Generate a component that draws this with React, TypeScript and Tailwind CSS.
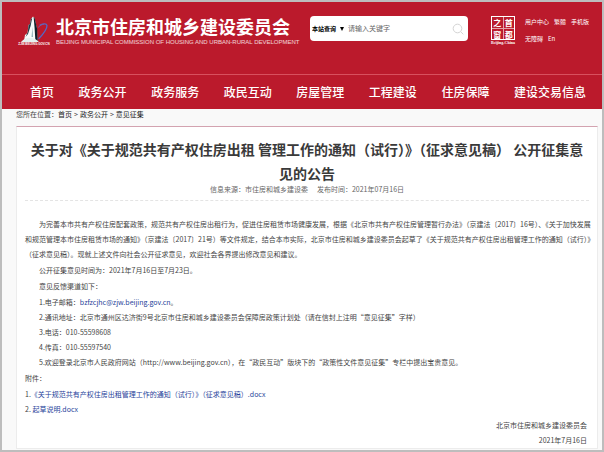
import { useState } from "react";

const NAV = ["首页", "政务公开", "政务服务", "政民互动", "房屋管理", "工程建设", "住房保障", "建设交易信息"];
const CRUMBS = ["首页", "政务公开", "意见征集"];
const USER_LINKS = [
  ["用户中心", "繁體", "手机版"],
  ["无障碍", "En"],
];

function Logo() {
  return (
    <div className="flex w-9 shrink-0 flex-col items-center">
      <svg viewBox="0 0 36 26" className="h-[26px] w-9" aria-hidden="true">
        {/* tower */}
        <path d="M8 25 L9 19 L11.5 17 L12.5 9 L14 8 L15 3 L17 0.5 L18.5 2 L21 13 L21.5 25 Z" fill="#f6fbfb" />
        <path d="M17.6 1 L18.6 2 L21.2 13 L21.7 25 L19.4 25 L18.6 12 Z" fill="#10202a" />
        <path d="M15 3 L16.2 2 L14.6 10 L12 18 L9.5 21 L11.8 16 L12.6 9 L14 8 Z" fill="#223842" />
        <path d="M16.5 11 L17 21 L15.5 21 Z" fill="#8fb0b8" />
        <path d="M5 26 Q10 21 15 22 Q19 22 23 26 Z" fill="#e4f1f1" />
        {/* ribbon */}
        <path d="M24 9 Q30 6.5 31 9.5 Q31 14 23 22.5" fill="none" stroke="#5468c4" strokeWidth="1.3" strokeLinecap="round" />
        <path d="M22 11.5 Q25 8.5 28 8" fill="none" stroke="#7d5aa8" strokeWidth="0.8" />
      </svg>
      <span className="whitespace-nowrap font-['Liberation_Sans'] text-[3px] leading-[4px] font-bold text-white">
        ZJW.BEIJING.GOV.CN
      </span>
    </div>
  );
}

function Seal() {
  return (
    <div className="flex w-[26px] shrink-0 flex-col items-center">
      <div className="grid size-6 grid-cols-2 gap-px border border-white bg-white/60 text-center text-[8px] leading-[11px] font-bold">
        {["之", "首", "窗", "都"].map((c) => (
          <span key={c} className="overflow-hidden bg-[#bb1a2c]">{c}</span>
        ))}
      </div>
      <span className="whitespace-nowrap font-['Liberation_Serif'] text-[4px] leading-[5px] font-bold">Beijing-China</span>
    </div>
  );
}

function SearchBox() {
  const [keyword, setKeyword] = useState("");

  return (
    <form
      role="search"
      onSubmit={(e) => e.preventDefault()}
      className="flex h-[25px] w-[158px] shrink-0 items-center rounded bg-white pr-1 pl-0.5 text-[7px]"
    >
      <select
        aria-label="查询范围"
        className="w-[26px] appearance-none bg-transparent text-[6px] font-bold text-black outline-none"
      >
        <option>本站查询</option>
      </select>
      <svg viewBox="0 0 4 4" className="mx-0.5 size-1 shrink-0" aria-hidden="true">
        <path d="M0 0 H4 L2 4 Z" fill="#000" />
      </svg>
      <input
        type="text"
        aria-label="关键字"
        placeholder="请输入关键字"
        value={keyword}
        onChange={(e) => setKeyword(e.target.value)}
        className="ml-0.5 min-w-0 flex-1 text-[#333] outline-none placeholder:text-[#666]"
      />
      <button type="submit" aria-label="搜索">
        <svg viewBox="0 0 12 12" className="size-3" fill="none" stroke="#d4d4d4" aria-hidden="true">
          <circle cx="5.5" cy="5.5" r="4.3" />
          <path d="M8.8 8.8 L11.3 11.3" />
        </svg>
      </button>
    </form>
  );
}

function Header() {
  return (
    <header className="bg-[#bb1a2c] text-white">
      <div className="flex h-[72px] items-start pt-3.5 pr-3 pl-3.5">
        <Logo />
        <div className="ml-1 w-60 shrink-0">
          <p className="text-[18px] leading-5 font-bold whitespace-nowrap">北京市住房和城乡建设委员会</p>
          <p className="font-['Liberation_Sans'] text-[6px] leading-3 whitespace-nowrap text-white/80">
            BEIJING MUNICIPAL COMMISSION OF HOUSING AND URBAN-RURAL DEVELOPMENT
          </p>
        </div>
        <div className="ml-auto flex">
          <SearchBox />
          <div className="ml-[22px]">
            <Seal />
          </div>
          <div className="ml-[9px] flex w-[65px] flex-col gap-2 pt-px text-[6px] leading-[9px]">
            {USER_LINKS.map((row) => (
              <div key={row[0]} className="flex gap-[5px] whitespace-nowrap">
                {row.map((t) => (
                  <a key={t} href="#">{t}</a>
                ))}
              </div>
            ))}
          </div>
        </div>
      </div>
      <nav className="flex h-[35px] items-center justify-between border-t border-[#d8505e] pr-4 pl-7 text-[12px] leading-4 font-medium">
        {NAV.map((t) => (
          <a key={t} href="#" className="whitespace-nowrap">{t}</a>
        ))}
      </nav>
    </header>
  );
}

export default function App() {
  return (
    <div
      lang="zh-CN"
      className="border-2 border-[#bdbdbd] bg-[#f9f9f9] font-['Noto_Sans_CJK_SC',sans-serif] text-[7px] text-[#444]"
    >
      <Header />

      <div className="pl-3.5 leading-[11px]">
        您所在位置：
        {CRUMBS.map((c, i) => (
          <span key={c}>
            {i > 0 && <span className="mx-0.5">&gt;</span>}
            <a href="#" className="text-[#222]">{c}</a>
          </span>
        ))}
      </div>

      <main className="mt-1.5 mr-1 mb-px ml-3.5 border border-[#ececec] border-t-[#d3a3b0] bg-white">
        <h1 className="px-2 pt-2.5 text-center text-[14px] leading-6 font-bold text-[#3a3a3a]">
          关于对《关于规范共有产权住房出租 管理工作的通知（试行）》（征求意见稿） 公开征集意见的公告
        </h1>
        <div className="mx-2 flex justify-center gap-[9px] border-b border-dashed border-[#e4e4e4] pb-1.5 leading-[9px] text-[#666]">
          <span>信息来源：市住房和城乡建设委</span>
          <span>发布时间：2021年07月16日</span>
        </div>

        <article className="flex flex-col gap-px pt-4 pr-0.5 pl-2 leading-[15px]">
          <p className="indent-[14px]">
            为完善本市共有产权住房配套政策，规范共有产权住房出租行为，促进住房租赁市场健康发展，根据《北京市共有产权住房管理暂行办法》（京建法〔2017〕16号）、《关于加快发展和规范管理本市住房租赁市场的通知》（京建法〔2017〕21号）等文件规定，结合本市实际，北京市住房和城乡建设委员会起草了《关于规范共有产权住房出租管理工作的通知（试行）》（征求意见稿）。现就上述文件向社会公开征求意见，欢迎社会各界提出修改意见和建议。
          </p>
          <p className="indent-[14px]">公开征集意见时间为：2021年7月16日至7月23日。</p>
          <p className="indent-[14px]">意见反馈渠道如下：</p>
          <ul className="pl-[14px]">
            <li>
              1.电子邮箱：
              <a href="mailto:bzfzcjhc@zjw.beijing.gov.cn" className="text-[#1f3f9a]">bzfzcjhc@zjw.beijing.gov.cn</a>。
            </li>
            <li>2.通讯地址：北京市通州区达济街9号北京市住房和城乡建设委员会保障房政策计划处（请在信封上注明“意见征集”字样）</li>
            <li>3.电话：010-55598608</li>
            <li>4.传真：010-55597540</li>
            <li>5.欢迎登录北京市人民政府网站（http://www.beijing.gov.cn），在“政民互动”版块下的“政策性文件意见征集”专栏中提出宝贵意见。</li>
          </ul>
          <p>附件：</p>
          <ol>
            <li>
              1.
              <a href="#" className="text-[#1f3f9a]">《关于规范共有产权住房出租管理工作的通知（试行）》（征求意见稿）.docx</a>
            </li>
            <li>
              2. <a href="#" className="text-[#1f3f9a]">起草说明.docx</a>
            </li>
          </ol>
          <div className="pr-2 text-right">
            <p>北京市住房和城乡建设委员会</p>
            <p>2021年7月16日</p>
          </div>
        </article>
      </main>
    </div>
  );
}
